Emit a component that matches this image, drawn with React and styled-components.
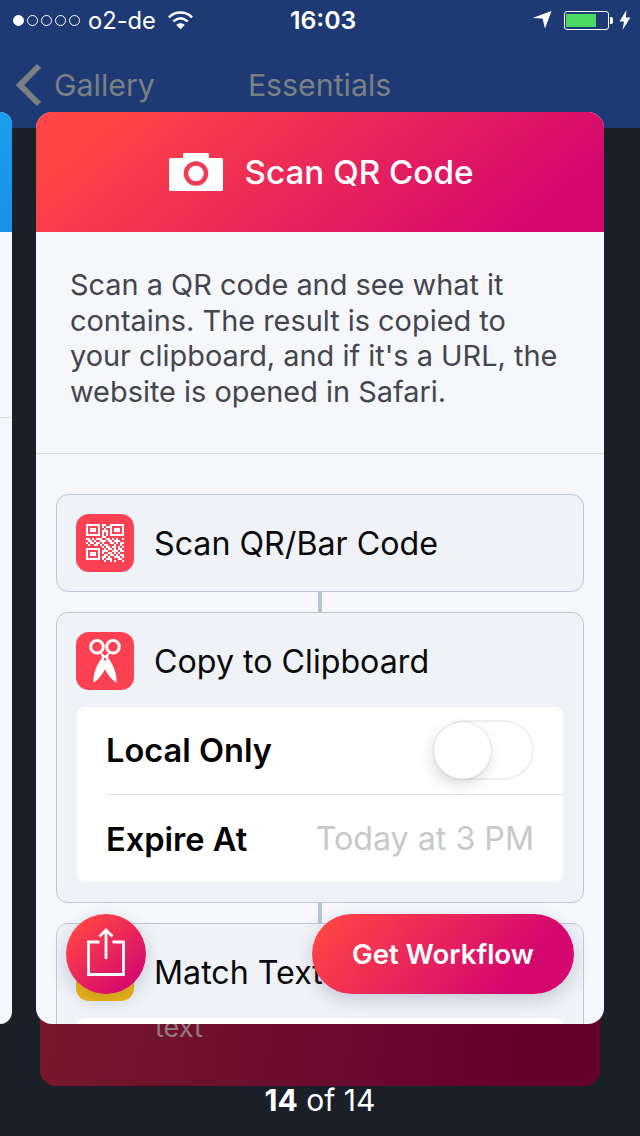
import styled, { createGlobalStyle } from "styled-components";

const GlobalStyle = createGlobalStyle`
  html, body { margin: 0; padding: 0; background: #1b1f28; }
  * { box-sizing: border-box; }
`;

const hot = "linear-gradient(140deg, #ff4545 12%, #d4086f 88%)";

const qrRows = [
  "1111111011001111111",
  "1000001010111000001",
  "1011101001001011101",
  "1011101011101011101",
  "1000001010101000001",
  "1111111010101111111",
  "0000000011000000000",
  "1101011100110101001",
  "0110100111011011100",
  "1011011010001101011",
  "0100110101100010010",
  "0000000010110110101",
  "1111111001011010110",
  "1000001011100111011",
  "1011101010011010100",
  "1011101001101101011",
  "1000001011010011101",
  "1111111010111000110",
  "0000000001001010001",
];

function App() {
  return (
    <Page>
      <GlobalStyle />
      <TopBar>
        <StatusBar>
          <Carrier>
            <Dots>
              {[0, 1, 2, 3, 4].map((i) => <Dot key={i} $on={i === 0} />)}
            </Dots>
            <CarrierName>o2-de</CarrierName>
            <svg width="25" height="20" viewBox="0 0 26 20">
              <path d="M1 7.2C8 .6 18 .6 25 7.2" fill="none" stroke="#fff" strokeWidth="2.6" />
              <path d="M5.5 11.4C10.200 7.300 15.800 7.300 20.500 11.400" fill="none" stroke="#fff" strokeWidth="2.600" />
              <path d="M13 19.500L8.600 15.100C11.200 12.900 14.800 12.900 17.400 15.100Z" fill="#fff" />
            </svg>
          </Carrier>
          <Clock>16:03</Clock>
          <StatusRight>
            <svg width="20" height="18" viewBox="0 0 20 18">
              <path d="M0.500 7L19.500 0L13 17.500L10.500 7.500Z" fill="#fff" />
            </svg>
            <Battery>
              <BatteryFill style={{ width: "74%" }} />
            </Battery>
            <BoltIcon width="12" height="20" viewBox="0 0 12 20">
              <path d="M7.500 0L0.500 11.500H5L3.500 20L11.500 7.500H6.800Z" fill="#fff" />
            </BoltIcon>
          </StatusRight>
        </StatusBar>
        <NavBar>
          <svg width="28" height="44" viewBox="0 0 28 44">
            <path d="M24 3L5 22L24 41" fill="none" stroke="#7c7f82" strokeWidth="6" />
          </svg>
          <BackLabel>Gallery</BackLabel>
          <NavTitle>Essentials</NavTitle>
        </NavBar>
      </TopBar>

      <Deck>
        <PrevCard>
          <PrevHead />
          <PrevLine />
        </PrevCard>
        <BehindCard>text</BehindCard>
        <Card>
          <CardHeader>
            <svg width="54" height="38" viewBox="0 0 54 38">
              <path d="M14 5V1.500C14 .6 14.600 0 15.500 0H38.500C39.400 0 40 .6 40 1.500V5H52.500C53.400 5 54 5.600 54 6.500V36.500C54 37.400 53.400 38 52.500 38H1.500C.6 38 0 37.400 0 36.500V6.500C0 5.600 .6 5 1.500 5Z" fill="#fff" />
              <circle cx="27" cy="20.500" r="10" fill="none" stroke="#f23a55" strokeWidth="4.500" />
            </svg>
            <CardTitle>Scan QR Code</CardTitle>
          </CardHeader>
          <Description>
            Scan a QR code and see what it contains. The result is copied to your clipboard, and if it's a URL, the website is opened in Safari.
          </Description>
          <Actions>
            <Action>
              <ActionHead>
                <ActionIcon $color="#fb4152">
                  <svg width="38" height="38" viewBox="0 0 19 19">
                    {qrRows.map((row, y) =>
                      row.split("").map((c, x) => c === "1" && <rect key={x + "-" + y} x={x} y={y} width="1" height="1" fill="#fff" />)
                    )}
                  </svg>
                </ActionIcon>
                <ActionName>Scan QR/Bar Code</ActionName>
              </ActionHead>
            </Action>
            <Connector />
            <Action>
              <ActionHead>
                <ActionIcon $color="#fb4152">
                  <svg width="32" height="44" viewBox="0 0 32 44">
                    <circle cx="8" cy="7.800" r="6.300" fill="none" stroke="#fff" strokeWidth="3" />
                    <circle cx="24" cy="7.800" r="6.300" fill="none" stroke="#fff" strokeWidth="3" />
                    <path d="M20.500 13L18.500 21C17.500 30 12 39 4.500 43.700C4 36 6.500 28 12 20Z" fill="#fff" />
                    <path d="M11.500 13L13.500 21C14.500 30 20 39 27.500 43.700C28 36 25.500 28 20 20Z" fill="#fff" />
                    <circle cx="16" cy="20.300" r="1.200" fill="#fb4152" />
                  </svg>
                </ActionIcon>
                <ActionName>Copy to Clipboard</ActionName>
              </ActionHead>
              <Settings>
                <SettingRow>
                  <SettingLabel $up>Local Only</SettingLabel>
                  <Toggle>
                    <Knob />
                  </Toggle>
                </SettingRow>
                <SettingRow>
                  <SettingLabel>Expire At</SettingLabel>
                  <SettingValue>Today at 3 PM</SettingValue>
                </SettingRow>
              </Settings>
            </Action>
            <Connector />
            <Action>
              <ActionHead>
                <ActionIcon $color="#f0b616" />
                <ActionName>Match Text</ActionName>
              </ActionHead>
              <Settings />
            </Action>
          </Actions>
          <ShareButton>
            <svg width="40" height="48" viewBox="0 0 40 48">
              <path d="M13.500 14H2.500V46.500H37.500V14H26.500" fill="none" stroke="#fff" strokeWidth="2.800" />
              <path d="M20 31V2M13.500 8.500L20 2L26.500 8.500" fill="none" stroke="#fff" strokeWidth="2.800" />
            </svg>
          </ShareButton>
          <GetButton>Get Workflow</GetButton>
        </Card>
      </Deck>
      <Pager><strong>14</strong> of 14</Pager>
    </Page>
  );
}

const Page = styled.div`
  position: relative;
  width: 640px;
  height: 1136px;
  overflow: hidden;
  background: #1b1f28;
  font-family: Inter, "Liberation Sans", sans-serif;
`;
const TopBar = styled.header`
  height: 128px;
  background: #1d3a74;
  color: #fff;
`;
const StatusBar = styled.div`
  height: 40px;
  padding: 0 9px 0 13px;
  display: grid;
  grid-template-columns: 278px auto 1fr;
  align-items: center;
`;
const Carrier = styled.div`
  display: flex;
  align-items: center;
`;
const Dots = styled.div`
  display: flex;
  gap: 3px;
`;
const Dot = styled.span`
  width: 11px;
  height: 11px;
  border-radius: 50%;
  border: 1px solid #fff;
  background: ${({ $on }) => ($on ? "#fff" : "transparent")};
`;
const CarrierName = styled.span`
  font-size: 23.700px;
  margin: 0 12px 0 8px;
`;
const Clock = styled.span`
  font-size: 24.800px;
  font-weight: 600;
  margin-left: -1px;
`;
const StatusRight = styled.div`
  display: flex;
  align-items: center;
  justify-content: flex-end;
  gap: 12px;
`;
const Battery = styled.div`
  position: relative;
  width: 45px;
  height: 19px;
  border: 1px solid #fff;
  border-radius: 3px;
  padding: 2px 1px;
  margin-right: 4px;
  &::after {
    content: "";
    position: absolute;
    right: -5px;
    top: 5px;
    width: 3px;
    height: 7px;
    background: #fff;
    border-radius: 0 2px 2px 0;
  }
`;
const BatteryFill = styled.div`
  height: 100%;
  background: #4cd964;
`;
const BoltIcon = styled.svg`
  margin-left: -6px;
`;
const NavBar = styled.nav`
  height: 88px;
  padding: 23px 0 0 15px;
  display: flex;
  align-items: flex-start;
  color: #7c7f82;
  font-size: 30.300px;
`;
const BackLabel = styled.span`
  margin: 4px 0 0 11px;
`;
const NavTitle = styled.span`
  margin: 4px 0 0 93px;
`;
const Deck = styled.main`
  position: relative;
  height: 912px;
  margin-top: -16px;
  display: flex;
  gap: 24px;
`;
const PrevCard = styled.div`
  width: 12px;
  background: #f4f6fb;
  border-radius: 0 12px 12px 0;
  overflow: hidden;
`;
const PrevHead = styled.div`
  height: 120px;
  background: linear-gradient(140deg, #1aa0ee, #1b8fe8);
`;
const PrevLine = styled.div`
  height: 1px;
  margin-top: 185px;
  background: #d9dde4;
`;
const BehindCard = styled.div`
  position: absolute;
  left: 40px;
  top: 800px;
  width: 560px;
  height: 174px;
  padding: 99px 0 0 115px;
  border-radius: 16px;
  background: linear-gradient(100deg, #771a2c, #66002f 85%);
  color: #8f7c80;
  font-size: 27px;
`;
const Card = styled.section`
  position: relative;
  width: 568px;
  height: 912px;
  border-radius: 16px;
  overflow: hidden;
  background: #f5f7fb;
`;
const CardHeader = styled.div`
  height: 120px;
  padding-left: 2px;
  background: ${hot};
  display: flex;
  align-items: center;
  justify-content: center;
  gap: 22px;
`;
const CardTitle = styled.h1`
  margin: 0;
  font-size: 33.200px;
  font-weight: 500;
  color: #fff;
`;
const Description = styled.p`
  margin: 0;
  height: 222px;
  padding: 35px 34px 0;
  border-bottom: 1px solid #d8dce4;
  font-size: 28.900px;
  line-height: 35.600px;
  color: #43464e;
`;
const Actions = styled.div`
  padding: 40px 20px 0;
  display: flex;
  flex-direction: column;
  align-items: center;
`;
const Action = styled.div`
  width: 100%;
  flex-shrink: 0;
  padding: 0 20px 19px;
  background: #eff2f7;
  border: 1px solid #bdc9d6;
  border-radius: 12px;
`;
const ActionHead = styled.div`
  height: 77px;
  margin-left: -1px;
  padding-top: 19px;
  display: flex;
  align-items: flex-start;
  gap: 20px;
`;
const ActionIcon = styled.div`
  width: 58px;
  height: 58px;
  flex-shrink: 0;
  border-radius: 13px;
  background: ${({ $color }) => $color};
  display: flex;
  align-items: center;
  justify-content: center;
`;
const ActionName = styled.span`
  padding-top: 1px;
  font-size: 32.200px;
  line-height: 58px;
  color: #0a0a0c;
`;
const Connector = styled.div`
  width: 4px;
  height: 20px;
  flex-shrink: 0;
  background: #b7c6d6;
`;
const Settings = styled.div`
  margin: 17px 0 1px;
  background: #fff;
  border-radius: 8px;
  padding-left: 29px;
  min-height: 175px;
`;
const SettingRow = styled.div`
  height: 87px;
  padding-right: 29px;
  display: flex;
  align-items: center;
  justify-content: space-between;
  & + & {
    height: 88px;
    border-top: 1px solid #e3e5ea;
  }
`;
const SettingLabel = styled.span`
  margin-top: ${({ $up }) => ($up ? "-2px" : "0")};
  font-size: 32.600px;
  font-weight: 600;
  color: #050505;
`;
const SettingValue = styled.span`
  font-size: 32.200px;
  color: #c8c9cd;
`;
const Toggle = styled.div`
  position: relative;
  width: 99px;
  height: 60px;
  margin-top: -2px;
  border-radius: 30px;
  border: 2px solid #f0f0f0;
  background: #fff;
`;
const Knob = styled.div`
  position: absolute;
  left: -3px;
  top: 0;
  width: 57px;
  height: 57px;
  border-radius: 50%;
  background: #fff;
  box-shadow: 0 0 2px rgba(0, 0, 0, 0.22), -2px 6px 14px rgba(0, 0, 0, 0.14);
`;
const ShareButton = styled.button`
  position: absolute;
  left: 30px;
  top: 802px;
  width: 80px;
  height: 80px;
  padding: 0 0 4px;
  border: 0;
  border-radius: 50%;
  background: ${hot};
  box-shadow: 0 6px 18px rgba(40, 60, 90, 0.22);
  display: flex;
  align-items: center;
  justify-content: center;
`;
const GetButton = styled.button`
  position: absolute;
  left: 276px;
  top: 802px;
  width: 262px;
  height: 80px;
  border: 0;
  border-radius: 40px;
  background: linear-gradient(130deg, #ff4545 5%, #d4086f 78%);
  box-shadow: 0 6px 18px rgba(40, 60, 90, 0.22);
  color: #fff;
  font-family: inherit;
  font-size: 27.600px;
  font-weight: 600;
`;
const Pager = styled.footer`
  margin-top: 58px;
  text-align: center;
  color: #fff;
  font-size: 30px;
  strong {
    font-weight: 700;
  }
`;

export default App;
